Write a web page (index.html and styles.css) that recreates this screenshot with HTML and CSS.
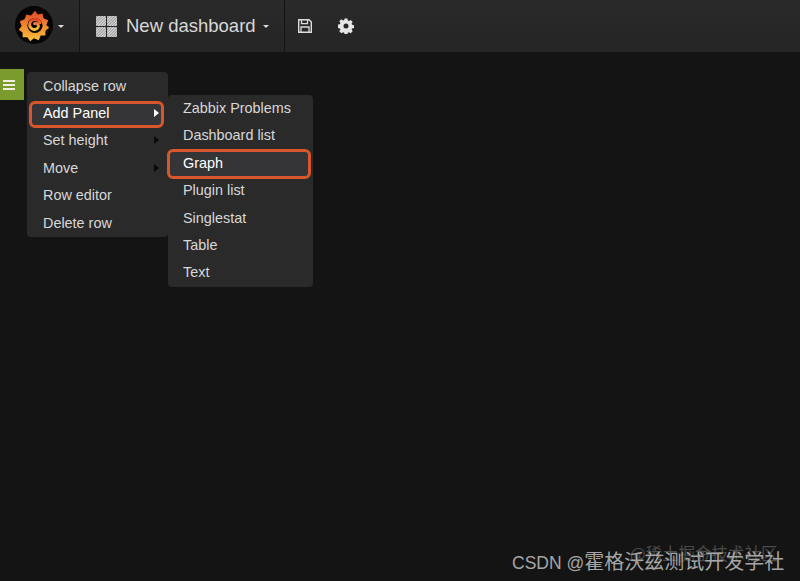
FILE: index.html
```html
<!DOCTYPE html>
<html lang="en">
<head>
<meta charset="utf-8">
<title>New dashboard</title>
<link rel="stylesheet" href="styles.css">
</head>
<body>
<header class="topbar">
  <div class="brand">
    <svg class="logo" width="38" height="38" viewBox="0 0 40 40">
      <defs><linearGradient id="g" x1="0" y1="0" x2="0" y2="1"><stop offset="0" stop-color="#e0452a"/><stop offset="0.5" stop-color="#f08a30"/><stop offset="1" stop-color="#fbc03c"/></linearGradient></defs>
      <circle cx="20" cy="20" r="20" fill="#050505"/>
      <path fill="url(#g)" d="M21 5l3 4 5-1 1 5 5 2-2 5 3 3-4 3 0 5-5 0-2 5-5-2-4 3-3-4-5 0 0-5-4-3 3-4-2-5 5-2 2-5 5 1z"/>
      <circle cx="21" cy="20.500" r="8" fill="#050505"/>
      <path fill="none" stroke="url(#g)" stroke-width="3" stroke-linecap="round" d="M26.500 17.500c-2-4.500-9.500-4.500-11 1-1 5.500 5.500 8 8.500 4.500 2-3-1-5.500-3.500-4.500"/>
    </svg>
    <span class="caret"></span>
  </div>
  <div class="title">
    <svg class="grid" width="21" height="21" viewBox="0 0 21 21">
      <defs><pattern id="h" width="2" height="2" patternUnits="userSpaceOnUse" patternTransform="rotate(45)"><rect width="2" height="2" fill="#9a9a9a"/><rect width="1" height="2" fill="#dcdcdc"/></pattern></defs>
      <rect width="10" height="10" rx="1" fill="url(#h)"/><rect x="11" width="10" height="10" rx="1" fill="url(#h)"/>
      <rect y="11" width="10" height="10" rx="1" fill="url(#h)"/><rect x="11" y="11" width="10" height="10" rx="1" fill="url(#h)"/>
    </svg>
    <span class="name">New dashboard</span>
    <span class="caret"></span>
  </div>
  <div class="tools">
    <svg width="16" height="16" viewBox="0 0 16 16"><path fill="none" stroke="#dcdcdc" stroke-width="1.400" d="M1.700 1.700h10.300l2.300 2.300v10.300H1.700z"/><path fill="none" stroke="#dcdcdc" stroke-width="1.300" d="M4.500 2v3.700h6V2M4 14v-5h8v5"/></svg>
    <svg width="16" height="16" viewBox="0 0 16 16"><path fill="#e6e6e6" fill-rule="evenodd" d="M6.600 0.500h2.800l.4 2 1.200.5 1.700-1.100 2 2-1.100 1.700.5 1.200 2 .4v2.800l-2 .4-.5 1.200 1.100 1.700-2 2-1.700-1.100-1.200.5-.4 2H6.600l-.4-2-1.200-.5-1.700 1.100-2-2 1.100-1.700-.5-1.200-2-.4V6.600l2-.4.5-1.200-1.100-1.700 2-2 1.700 1.100 1.200-.5zM8 5.500a2.500 2.500 0 1 0 0 5 2.500 2.500 0 0 0 0-5z"/></svg>
  </div>
</header>
<main class="canvas">
  <button class="row-toggle" aria-label="Row menu"><span></span><span></span><span></span></button>
  <ul class="menu menu-row">
    <li>Collapse row</li>
    <li class="active has-sub">Add Panel</li>
    <li class="has-sub">Set height</li>
    <li class="has-sub">Move</li>
    <li>Row editor</li>
    <li>Delete row</li>
  </ul>
  <ul class="menu menu-panel">
    <li>Zabbix Problems</li>
    <li>Dashboard list</li>
    <li class="active">Graph</li>
    <li>Plugin list</li>
    <li>Singlestat</li>
    <li>Table</li>
    <li>Text</li>
  </ul>
</main>
<div class="mark-back">@稀土掘金技术社区</div>
<div class="mark-front"><span class="latin">CSDN @</span>霍格沃兹测试开发学社</div>
</body>
</html>
```
FILE: styles.css
```css
* { box-sizing: border-box; }
html, body { margin: 0; height: 100%; }
body {
  position: relative;
  width: 800px;
  height: 581px;
  overflow: hidden;
  background: #141414;
  font-family: "Liberation Sans", Arial, sans-serif;
  color: #dcdcdc;
}
.topbar {
  display: flex;
  align-items: stretch;
  height: 52px;
  background: linear-gradient(#2a2a2b, #252526);
}
.brand {
  display: flex;
  align-items: center;
  gap: 5px;
  width: 80px;
  padding-left: 15px;
  border-right: 1px solid #131313;
}
.logo { margin-bottom: 2px; }
.caret {
  width: 0;
  height: 0;
  border-left: 3.500px solid transparent;
  border-right: 3.500px solid transparent;
  border-top: 3.500px solid #dcdcdc;
}
.title {
  display: flex;
  align-items: center;
  width: 205px;
  padding-left: 16px;
  border-right: 1px solid #131313;
}
.name {
  margin: 0 7px 0 9px;
  font-size: 18.500px;
  color: #d8d8d8;
}
.tools {
  display: flex;
  align-items: center;
  gap: 25px;
  padding-left: 12px;
}
.canvas {
  position: relative;
  height: 529px;
  padding-top: 17px;
}
.row-toggle {
  display: flex;
  flex-direction: column;
  justify-content: center;
  gap: 2px;
  width: 24px;
  height: 31px;
  padding: 0 3px;
  border: 0;
  background: #7b9b2e;
}
.row-toggle span { display: block; width: 12px; height: 2px; background: #f0f0e0; }
.menu {
  position: absolute;
  margin: 0;
  padding: 0;
  list-style: none;
  background: #2a2a2b;
  border-radius: 4px;
  font-size: 14.400px;
  color: #d8d8d8;
}
.menu li {
  position: relative;
  isolation: isolate;
  height: 27.400px;
  padding-left: 16px;
  line-height: 27.400px;
}
.menu-row { left: 27px; top: 20px; width: 141px; height: 165px; padding-top: 0.600px; }
.menu-panel { left: 168px; top: 43px; width: 145px; height: 192px; }
.menu-panel li { padding-left: 15px; }
.menu .active { color: #fff; }
.menu .active::before {
  content: "";
  position: absolute;
  left: 2px;
  right: 4px;
  top: 1px;
  bottom: -1px;
  background: #353537;
  border: 3px solid #d9562c;
  border-radius: 6px;
  z-index: -1;
}
.menu-panel .active::before { left: -1px; right: 2px; top: -1px; bottom: -2px; }
.has-sub::after {
  content: "";
  position: absolute;
  right: 9px;
  top: 9px;
  border-top: 4.500px solid transparent;
  border-bottom: 4.500px solid transparent;
  border-left: 5px solid #0a0a0a;
}
.active.has-sub::after { border-left-color: #fff; }
.mark-back {
  position: absolute;
  left: 630px;
  top: 541px;
  font: 16.500px "Noto Sans CJK SC", sans-serif;
  color: #4a4a4a;
  white-space: nowrap;
}
.mark-front {
  position: absolute;
  left: 512px;
  top: 546px;
  font: 20px "Noto Sans CJK SC", sans-serif;
  color: #a6a6a6;
  white-space: nowrap;
}
.latin { font: 17.500px "Liberation Sans", sans-serif; }
```
